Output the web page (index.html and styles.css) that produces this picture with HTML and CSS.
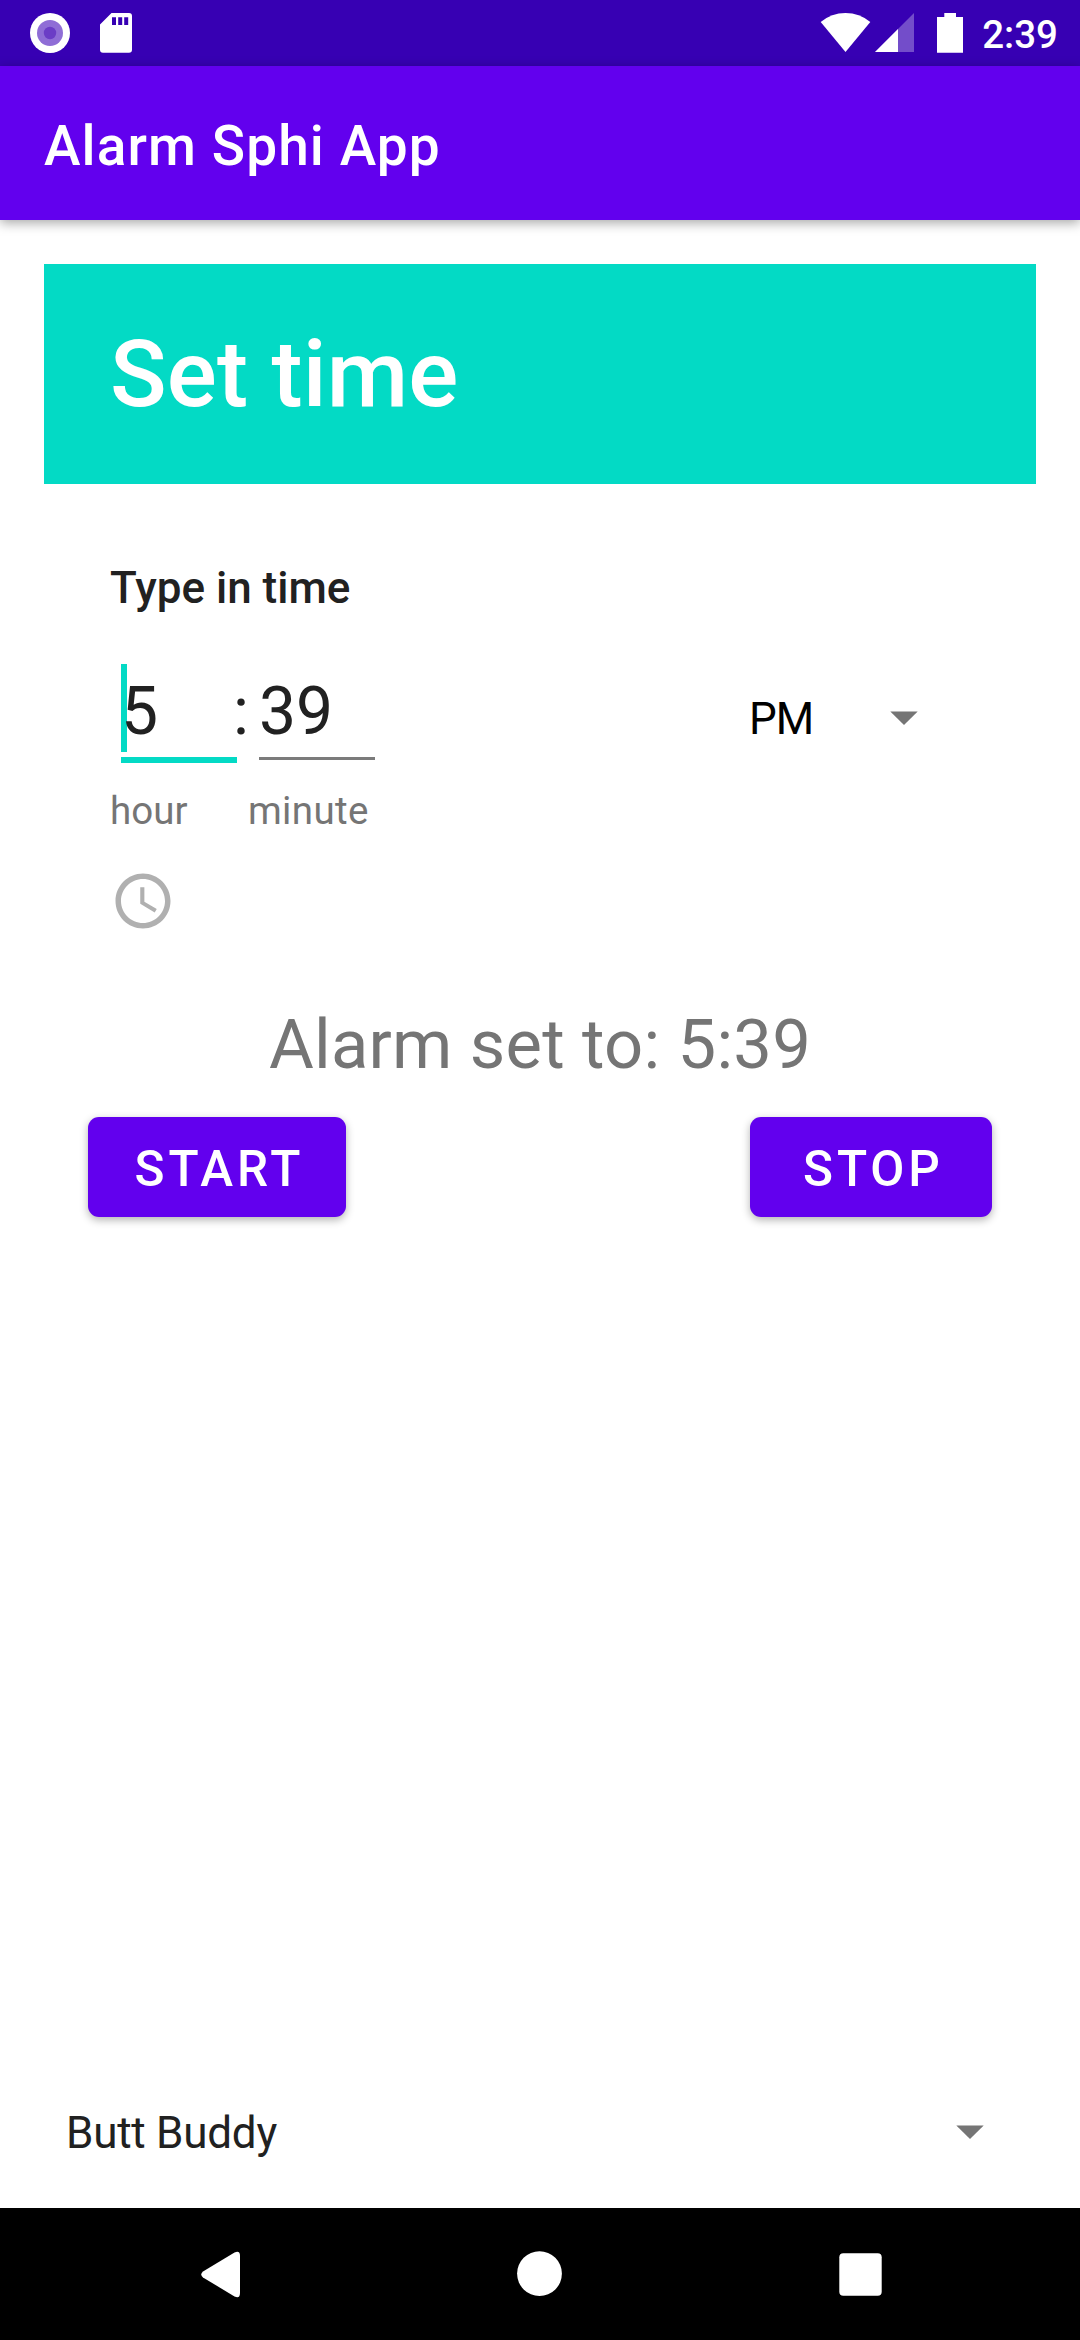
FILE: index.html
```html
<!DOCTYPE html>
<html lang="en">
<head>
<meta charset="utf-8">
<title>Alarm Sphi App</title>
<link rel="stylesheet" href="styles.css">
</head>
<body>
<div class="screen">
  <header class="status-bar">
    <svg class="status-left" width="110" height="66" viewBox="26 0 110 66">
      <circle cx="50" cy="33" r="20" fill="#fff"/>
      <circle cx="50" cy="33" r="13" fill="#8f6dd6"/>
      <circle cx="50" cy="33" r="6.2" fill="#6b3dc6"/>
      <path fill="#fff" fill-rule="evenodd" d="M111.500 13H129a3 3 0 0 1 3 3V49.700a3 3 0 0 1-3 3H103a3 3 0 0 1-3-3V24.500ZM112 17.300V25h4V17.300ZM118.200 17.300V25h4V17.300ZM124.200 17.300V25h4V17.300Z"/>
    </svg>
    <div class="status-right">
      <svg width="144" height="66" viewBox="820 0 144 66" fill="#fff">
        <path d="M820.700 22Q831.500 13 845.500 13T870.300 22L845.500 52Z"/>
        <path fill-opacity=".3" d="M914 13V52H875Z"/>
        <path d="M898 29V52H875Z"/>
        <path d="M944.300 13H956V17H963V52.700H937V17H944.300Z"/>
      </svg>
      <span class="clock">2:39</span>
    </div>
  </header>
  <div class="app-bar"><h1>Alarm Sphi App</h1></div>
  <main class="content">
    <section class="picker">
      <h2 class="banner">Set time</h2>
      <div class="picker-body">
        <p class="prompt">Type in time</p>
        <div class="time-row">
          <div class="field focused"><span class="caret"></span><span class="value">5</span></div>
          <span class="colon">:</span>
          <div class="field">39</div>
          <div class="spinner period">
            <span>PM</span>
            <svg class="arrow" width="28" height="14" viewBox="0 0 28 14"><path fill="#757575" d="M.3.400H27.700L14 14Z"/></svg>
          </div>
        </div>
        <div class="captions"><span>hour</span><span class="minute">minute</span></div>
        <svg class="mode" width="66" height="66" viewBox="0 0 24 24" fill="#b0b0b0"><path d="M11.990 2C6.470 2 2 6.480 2 12s4.470 10 9.990 10C17.520 22 22 17.520 22 12S17.520 2 11.990 2zM12 20c-4.420 0-8-3.580-8-8s3.580-8 8-8 8 3.580 8 8-3.580 8-8 8zM12.500 7H11v6l5.250 3.150.750-1.230-4.500-2.670z"/></svg>
      </div>
    </section>
    <p class="alarm-text">Alarm set to: 5:39</p>
    <div class="actions">
      <button class="btn start" type="button">START</button>
      <button class="btn stop" type="button">STOP</button>
    </div>
    <div class="spinner sound">
      <span>Butt Buddy</span>
      <svg class="arrow" width="28" height="14" viewBox="0 0 28 14"><path fill="#757575" d="M.3.400H27.700L14 14Z"/></svg>
    </div>
  </main>
  <nav class="nav-bar">
    <svg width="1080" height="132" viewBox="0 2208 1080 132" fill="#fff">
      <path d="M234.500 2252.600Q240 2250 240 2256V2293Q240 2299 234.500 2296.400L203 2277.500Q199.500 2274.500 203 2271.500Z"/>
      <circle cx="539.500" cy="2273.600" r="22.400"/>
      <rect x="839.300" y="2253.300" width="42.400" height="42.400" rx="4"/>
    </svg>
  </nav>
</div>
</body>
</html>
```
FILE: styles.css
```css
* { box-sizing: border-box; }
body, h1, h2, p { margin: 0; font-weight: inherit; }
body { font-family: Roboto, "Noto Sans", sans-serif; background: #fff; color: #212121; }
svg { display: block; flex: none; }

.screen { width: 1080px; height: 2340px; display: flex; flex-direction: column; overflow: hidden; }

.status-bar {
  height: 66px; padding: 0 22px 0 26px; flex: none;
  display: flex; justify-content: space-between;
  background: #3700b3; color: #fff;
}
.status-right { display: flex; gap: 18px; }
.clock { font-size: 38.5px; font-weight: 500; line-height: 70px; }

.app-bar {
  height: 154px; padding: 6px 44px 0; flex: none;
  display: flex; align-items: center;
  background: #6200ee; color: #fff;
  box-shadow: 0 3px 11px rgba(0, 0, 0, .35);
}
.app-bar h1 { font-size: 55px; font-weight: 500; letter-spacing: 1.1px; }

.content { flex: 1; padding: 44px 44px 49px; display: flex; flex-direction: column; }
.banner {
  height: 220px; padding-left: 66px;
  background: #03dac5; color: #fff;
  font-size: 93.5px; font-weight: 500; line-height: 220px; letter-spacing: .1px;
}
.picker-body { padding: 78px 66px 0; }
.prompt { font-size: 44px; font-weight: 500; line-height: 52px; }

.time-row { display: flex; align-items: flex-start; height: 110px; margin-top: 50px; padding-left: 11px; }
.field {
  position: relative; width: 116px; height: 96px;
  border-bottom: 3px solid #7b7b7b;
  font-size: 66px; line-height: 95px;
}
.field.focused { height: 99px; border-bottom: 6px solid #03dac5; }
.caret { position: absolute; left: 0; top: 0; width: 6px; height: 88px; background: #03dac5; }
.value { position: relative; }
.colon { width: 22px; text-indent: -4px; font-size: 66px; line-height: 95px; }

.spinner { display: flex; align-items: center; justify-content: space-between; font-size: 44px; line-height: 52px; letter-spacing: -.25px; }
.arrow { margin-bottom: 2px; }
.period { width: 169px; height: 110px; margin: 0 52px 0 auto; color: #000; letter-spacing: -1px; }

.captions { display: grid; grid-template-columns: 138px auto; margin-top: 13px; font-size: 38.5px; line-height: 47px; color: #757575; }
.minute { letter-spacing: .35px; }
.mode { margin-top: 34px; }

.alarm-text { margin-top: 71px; font-size: 68.75px; line-height: 80px; letter-spacing: .2px; text-align: center; color: #757575; }
.actions { display: flex; justify-content: space-between; margin-top: 32px; padding: 0 44px; }
.btn {
  height: 100px; padding: 3px 0 0 5px; border: 0; border-radius: 11px;
  background: #6200ee; color: #fff;
  font-family: inherit; font-size: 49.5px; font-weight: 500; letter-spacing: 3.9px;
  box-shadow: 0 3px 8px rgba(0, 0, 0, .3);
}
.start { width: 258px; }
.stop { width: 242px; }
.sound { margin-top: auto; padding: 0 52px 0 22px; }

.nav-bar { height: 132px; flex: none; background: #000; }
```
